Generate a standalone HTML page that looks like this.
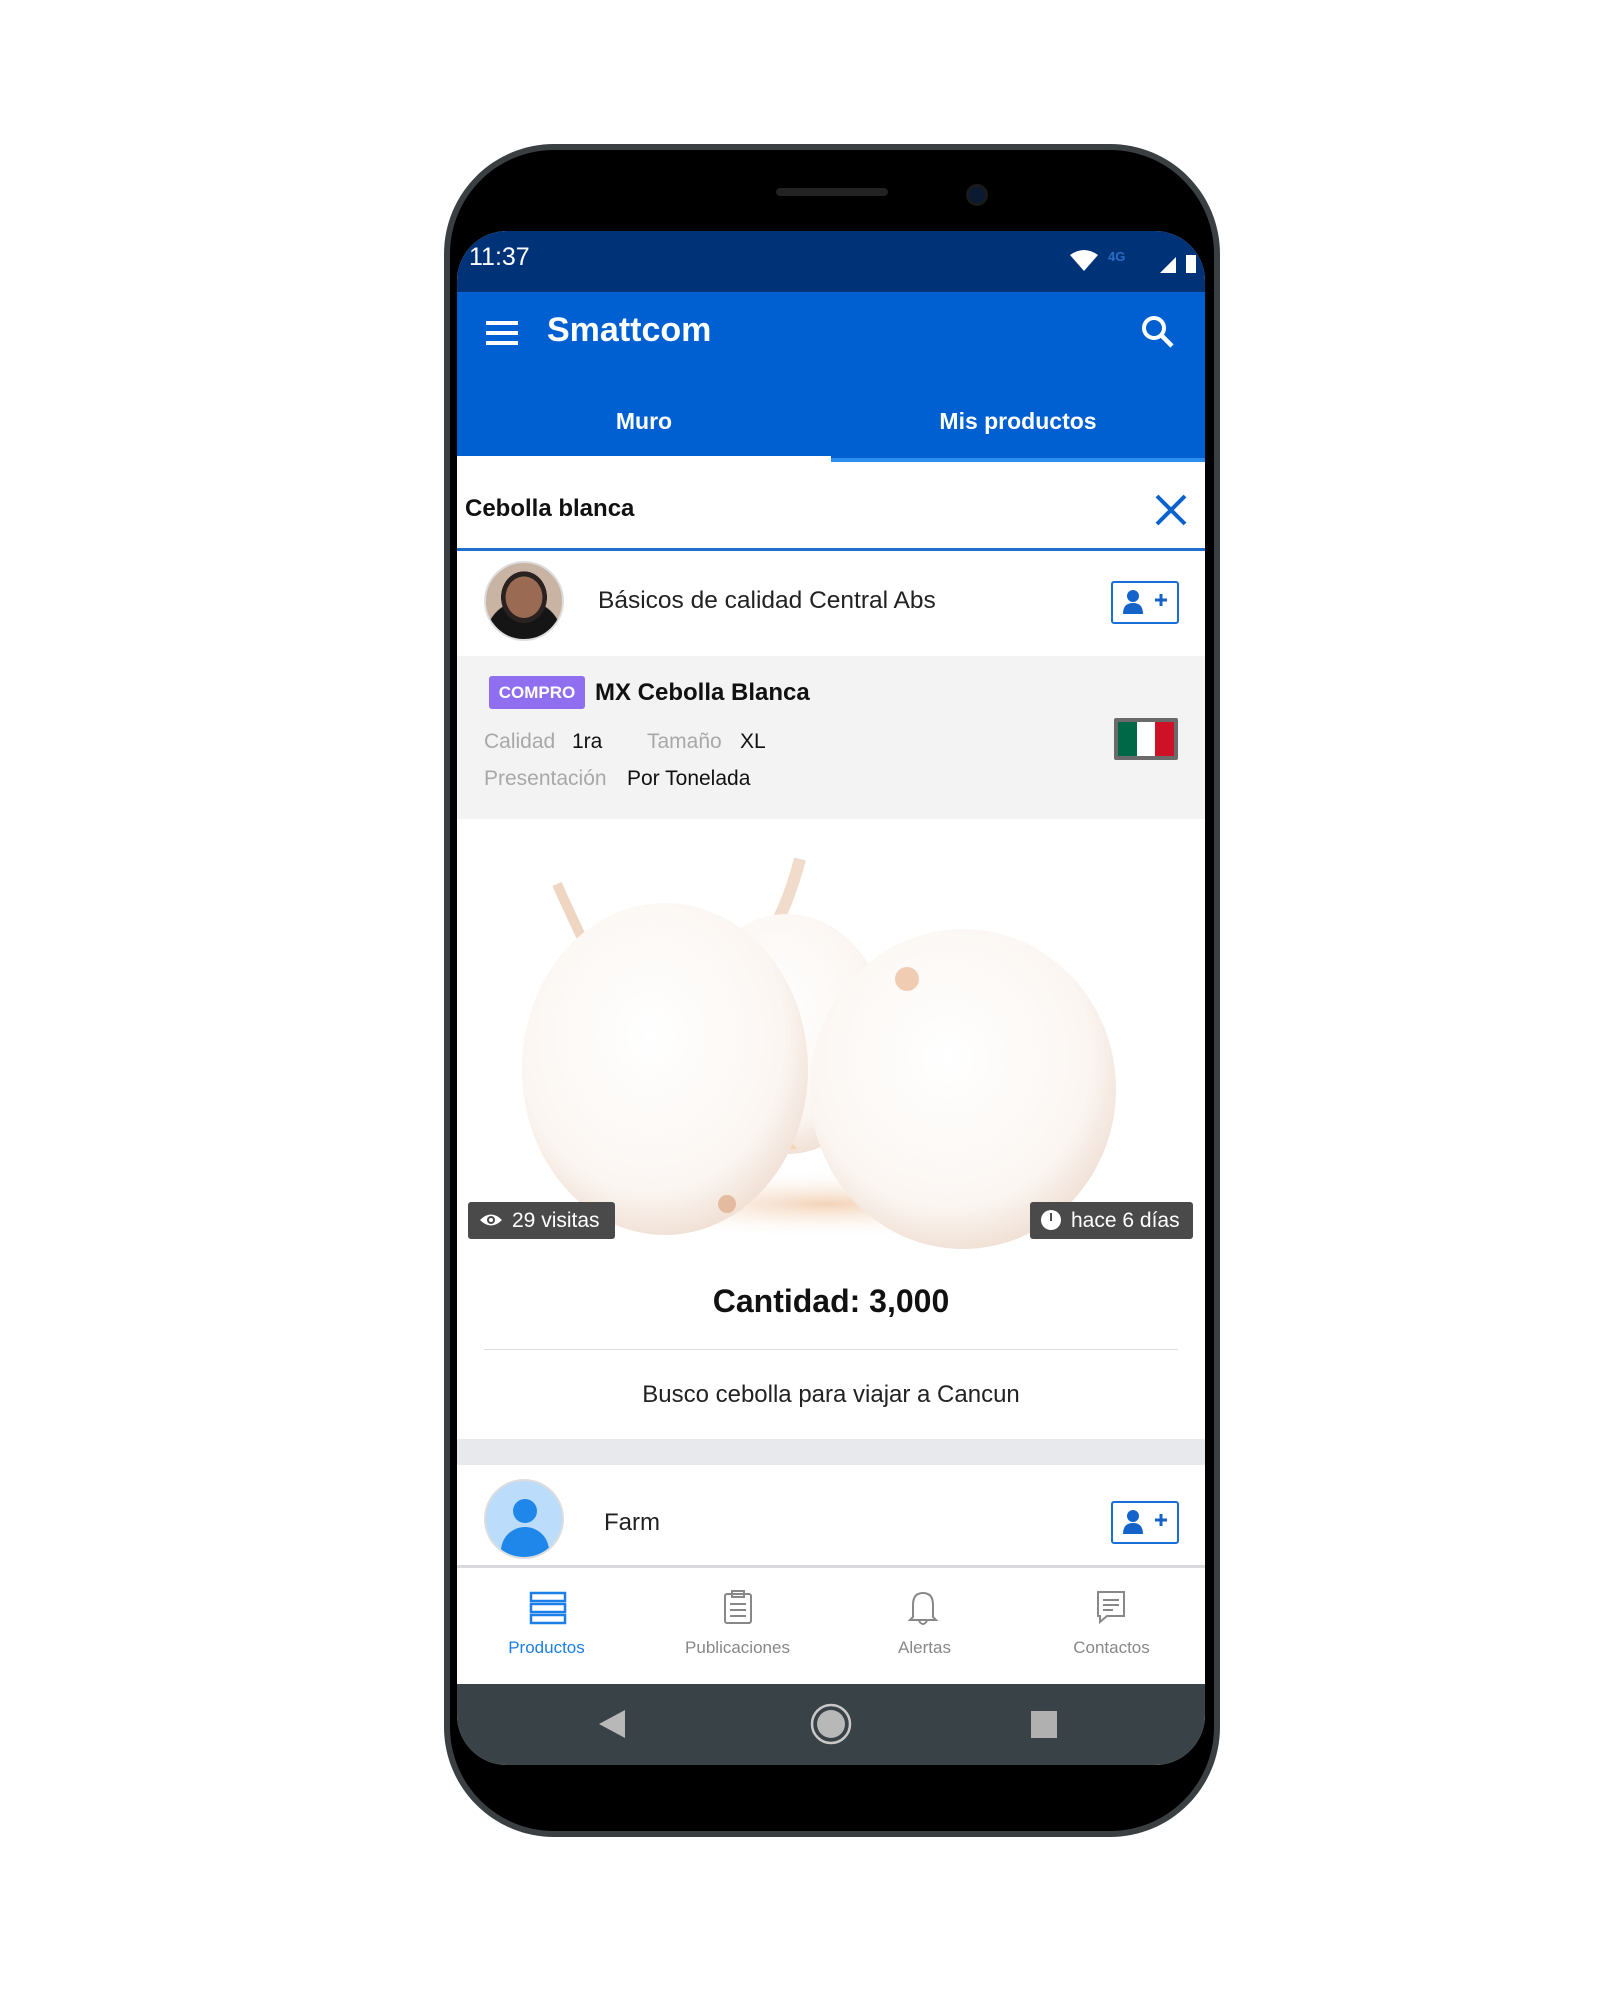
<!DOCTYPE html>
<html><head><meta charset="utf-8"><style>
*{margin:0;padding:0;box-sizing:border-box}
body{width:1616px;height:2000px;background:#fff;position:relative;overflow:hidden;font-family:"Liberation Sans",sans-serif}
.a{position:absolute}
.t{position:absolute;white-space:nowrap}
</style></head><body>
<div class="a" style="left:444px;top:144px;width:776px;height:1693px;background:#3a3f42;border-radius:110px"></div>
<div class="a" style="left:450px;top:150px;width:764px;height:1681px;background:#000;border-radius:104px"></div>
<div class="a" style="left:776px;top:188px;width:112px;height:8px;background:#222;border-radius:4px"></div>
<div class="a" style="left:966px;top:184px;width:22px;height:22px;background:#0a1a33;border-radius:50%;border:3px solid #1a1a1a"></div>
<div class="a" style="left:457px;top:231px;width:748px;height:1534px;background:#fff;border-radius:50px;overflow:hidden">
 <div class="a" style="left:0;top:0;width:748px;height:61px;background:#003278"></div>
 <div class="t" style="left:12px;top:12px;color:#fff;font-size:25px">11:37</div>
 <svg class="a" style="left:605px;top:14px" width="140" height="34" viewBox="0 0 140 34">
  <path d="M8 10 Q22 0 36 10 L22 26 Z" fill="#fff"/>
  <text x="46" y="16" font-size="13" fill="#2a6bc4" font-family="Liberation Sans" font-weight="bold">4G</text>
  <path d="M98 28 L114 12 L114 28 Z" fill="#fff"/>
  <rect x="124" y="10" width="10" height="18" fill="#fff"/>
 </svg>
 <div class="a" style="left:0;top:61px;width:748px;height:170px;background:#0060d1"></div>
 <div class="a" style="left:29px;top:90px;width:32px;height:4px;background:#fff"></div>
 <div class="a" style="left:29px;top:100px;width:32px;height:4px;background:#fff"></div>
 <div class="a" style="left:29px;top:110px;width:32px;height:4px;background:#fff"></div>
 <div class="t" style="left:90px;top:80px;color:#fff;font-size:34px;font-weight:bold">Smattcom</div>
 <svg class="a" style="left:682px;top:82px" width="40" height="40" viewBox="0 0 40 40"><circle cx="15" cy="15" r="10" fill="none" stroke="#fff" stroke-width="4"/><path d="M22 22 L33 33" stroke="#fff" stroke-width="4.5"/></svg>
 <div class="t" style="left:0;top:177px;width:374px;text-align:center;color:#fff;font-size:23px;font-weight:bold">Muro</div>
 <div class="t" style="left:374px;top:177px;width:374px;text-align:center;color:#fff;font-size:23px;font-weight:bold">Mis productos</div>
 <div class="a" style="left:0;top:225px;width:374px;height:6px;background:#fff"></div>
 <div class="a" style="left:374px;top:227px;width:374px;height:4px;background:#2a8ef0"></div>
 <div class="t" style="left:8px;top:264px;font-size:24px;font-weight:bold;color:#111">Cebolla blanca</div>
 <svg class="a" style="left:697px;top:262px" width="34" height="34" viewBox="0 0 34 34"><path d="M3 3 L31 31 M31 3 L3 31" stroke="#0a63cc" stroke-width="4"/></svg>
 <div class="a" style="left:0;top:317px;width:748px;height:3px;background:#1e6fd0"></div>
 <div class="a" style="left:27px;top:330px;width:80px;height:80px;border-radius:50%;background:radial-gradient(ellipse 40% 45% at 50% 45%,#9a6a52 0 60%,#2a2220 61% 75%,transparent 76%),radial-gradient(circle at 50% 100%,#151515 0 45%,#c9b4a4 46%);border:2px solid #ddd"></div>
 <div class="t" style="left:141px;top:356px;font-size:24.5px;color:#222">Básicos de calidad Central Abs</div>
 <div class="a" style="left:654px;top:350px;width:68px;height:43px;border:2px solid #1a6fd6;border-radius:3px"></div>
 <svg class="a" style="left:656px;top:352px" width="64" height="39" viewBox="0 0 64 39"><circle cx="20" cy="13" r="6" fill="#1463c8"/><path d="M10 31 Q10 20 20 20 Q30 20 30 31 Z" fill="#1463c8"/><path d="M42 17 H54 M48 11 V23" stroke="#1463c8" stroke-width="3"/></svg>
 <div class="a" style="left:0;top:425px;width:748px;height:163px;background:#f3f3f3"></div>
 <div class="a" style="left:32px;top:445px;width:96px;height:33px;background:#8f6ef0;border-radius:3px"></div>
 <div class="t" style="left:32px;top:452px;width:96px;text-align:center;font-size:17px;font-weight:bold;color:#fff">COMPRO</div>
 <div class="t" style="left:138px;top:448px;font-size:24px;font-weight:bold;color:#111">MX Cebolla Blanca</div>
 <div class="t" style="left:27px;top:499px;font-size:21px;color:#a8a8a8">Calidad</div>
 <div class="t" style="left:115px;top:499px;font-size:21px;color:#111">1ra</div>
 <div class="t" style="left:190px;top:499px;font-size:21px;color:#a8a8a8">Tamaño</div>
 <div class="t" style="left:283px;top:499px;font-size:21px;color:#111">XL</div>
 <div class="t" style="left:27px;top:536px;font-size:21px;color:#a8a8a8">Presentación</div>
 <div class="t" style="left:170px;top:536px;font-size:21px;color:#111">Por Tonelada</div>
 <div class="a" style="left:657px;top:487px;width:64px;height:42px;background:#6a6a6a;border-radius:2px;padding:4px;display:flex">
  <div style="flex:1;background:#006847"></div><div style="flex:1;background:#fff"></div><div style="flex:1;background:#ce1126"></div></div>
 <svg class="a" style="left:0;top:588px" width="748" height="430" viewBox="0 0 748 430">
  <defs>
   <radialGradient id="o" cx="45%" cy="40%" r="62%"><stop offset="0" stop-color="#fff"/><stop offset="0.75" stop-color="#fbf6f2"/><stop offset="1" stop-color="#f0dfd3"/></radialGradient>
   <radialGradient id="s" cx="50%" cy="50%" r="50%"><stop offset="0" stop-color="#f3d3b8"/><stop offset="1" stop-color="#fff" stop-opacity="0"/></radialGradient>
  </defs>
  <ellipse cx="370" cy="385" rx="260" ry="35" fill="url(#s)"/>
  <path d="M100 65 Q120 110 140 150" stroke="#efd6c3" stroke-width="10" fill="none"/>
  <path d="M343 40 Q330 90 310 120" stroke="#f1dccb" stroke-width="12" fill="none"/>
  <ellipse cx="330" cy="215" rx="100" ry="120" fill="url(#o)"/>
  <path d="M280 260 L300 330 L340 330 Z" fill="#f7d3b3"/>
  <ellipse cx="208" cy="250" rx="143" ry="166" fill="url(#o)"/>
  <ellipse cx="506" cy="270" rx="153" ry="160" fill="url(#o)"/>
  <circle cx="450" cy="160" r="12" fill="#ecc0a0" opacity="0.8"/>
  <circle cx="270" cy="385" r="9" fill="#e0b090" opacity="0.8"/>
 </svg>
 <div class="a" style="left:11px;top:971px;width:147px;height:37px;background:#4a4a4a;border-radius:3px"></div>
 <svg class="a" style="left:22px;top:980px" width="24" height="18" viewBox="0 0 24 18"><path d="M1 9 Q12 -2 23 9 Q12 20 1 9 Z" fill="#fff"/><circle cx="12" cy="9" r="4" fill="#4a4a4a"/><circle cx="12" cy="9" r="2" fill="#fff"/></svg>
 <div class="t" style="left:55px;top:978px;font-size:21px;color:#fff">29 visitas</div>
 <div class="a" style="left:573px;top:971px;width:163px;height:37px;background:#4a4a4a;border-radius:3px"></div>
 <div class="a" style="left:584px;top:979px;width:20px;height:20px;border-radius:50%;background:#fff"></div>
 <div class="a" style="left:593px;top:982px;width:2px;height:8px;background:#4a4a4a"></div>
 <div class="t" style="left:614px;top:978px;font-size:21px;color:#fff">hace 6 días</div>
 <div class="t" style="left:0;top:1052px;width:748px;text-align:center;font-size:32px;font-weight:bold;color:#111">Cantidad: 3,000</div>
 <div class="a" style="left:27px;top:1118px;width:694px;height:1px;background:#ddd"></div>
 <div class="t" style="left:0;top:1150px;width:748px;text-align:center;font-size:24px;color:#222">Busco cebolla para viajar a Cancun</div>
 <div class="a" style="left:0;top:1208px;width:748px;height:26px;background:#e8e9ed"></div>
 <div class="a" style="left:27px;top:1248px;width:80px;height:80px;border-radius:50%;background:#bcdcfb;border:2px solid #ddd;overflow:hidden">
  <div class="a" style="left:27px;top:18px;width:24px;height:24px;border-radius:50%;background:#1f87ea"></div>
  <div class="a" style="left:15px;top:46px;width:48px;height:40px;border-radius:24px 24px 0 0;background:#1f87ea"></div></div>
 <div class="t" style="left:147px;top:1278px;font-size:24px;color:#222">Farm</div>
 <div class="a" style="left:654px;top:1270px;width:68px;height:43px;border:2px solid #1a6fd6;border-radius:3px"></div>
 <svg class="a" style="left:656px;top:1272px" width="64" height="39" viewBox="0 0 64 39"><circle cx="20" cy="13" r="6" fill="#1463c8"/><path d="M10 31 Q10 20 20 20 Q30 20 30 31 Z" fill="#1463c8"/><path d="M42 17 H54 M48 11 V23" stroke="#1463c8" stroke-width="3"/></svg>
 <div class="a" style="left:0;top:1334px;width:748px;height:3px;background:#d8dadd"></div>
 <svg class="a" style="left:72px;top:1360px" width="38" height="34" viewBox="0 0 38 34"><g fill="none" stroke="#1a7fe8" stroke-width="2.5"><rect x="2" y="2" width="34" height="8"/><rect x="2" y="13" width="34" height="8"/><rect x="2" y="24" width="34" height="8"/></g></svg>
 <div class="t" style="left:-4px;top:1407px;width:187px;text-align:center;font-size:17px;color:#1a7fe8">Productos</div>
 <svg class="a" style="left:265px;top:1358px" width="32" height="36" viewBox="0 0 32 36"><g fill="none" stroke="#888" stroke-width="2"><rect x="3" y="5" width="26" height="29" rx="2"/><rect x="10" y="2" width="12" height="6"/><path d="M8 15h16M8 21h16M8 27h16"/></g></svg>
 <div class="t" style="left:187px;top:1407px;width:187px;text-align:center;font-size:17px;color:#888">Publicaciones</div>
 <svg class="a" style="left:450px;top:1358px" width="32" height="38" viewBox="0 0 32 38"><g fill="none" stroke="#888" stroke-width="2"><path d="M6 28 V16 Q6 4 16 4 Q26 4 26 16 V28 L29 31 H3 Z"/><path d="M12 32 Q16 38 20 32"/></g></svg>
 <div class="t" style="left:374px;top:1407px;width:187px;text-align:center;font-size:17px;color:#888">Alertas</div>
 <svg class="a" style="left:638px;top:1358px" width="32" height="38" viewBox="0 0 32 38"><g fill="none" stroke="#888" stroke-width="2"><path d="M3 3 H29 V27 H12 L5 33 V27 H3 Z"/><path d="M8 11h16M8 16h16M8 21h10"/></g></svg>
 <div class="t" style="left:561px;top:1407px;width:187px;text-align:center;font-size:17px;color:#888">Contactos</div>
 <div class="a" style="left:0;top:1453px;width:748px;height:81px;background:#394246"></div>
 <svg class="a" style="left:140px;top:1471px" width="460" height="44" viewBox="0 0 460 44"><path d="M2 22 L28 8 V36 Z" fill="#b8b8b8"/><circle cx="234" cy="22" r="19" fill="none" stroke="#c8c8c8" stroke-width="2.5"/><circle cx="234" cy="22" r="14" fill="#b8b8b8"/><rect x="434" y="9" width="27" height="27" fill="#b0b0b0"/></svg>
</div>
</body></html>
